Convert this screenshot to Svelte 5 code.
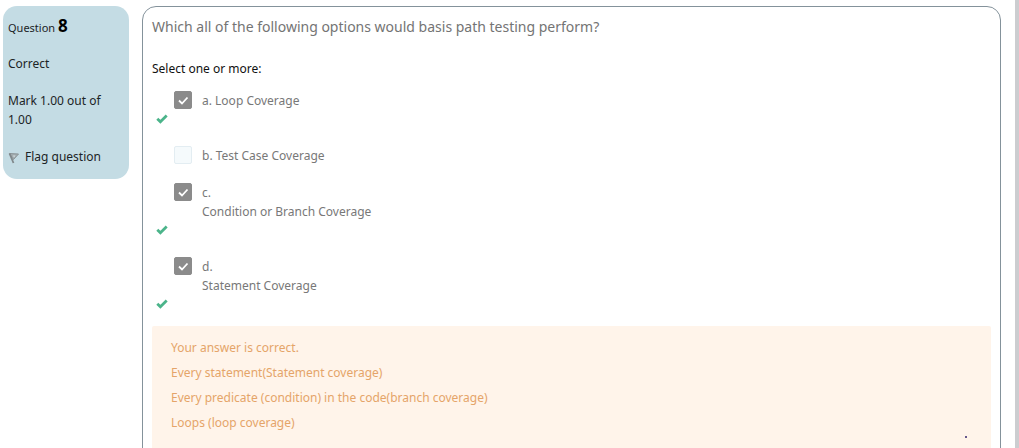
<script>
  const question = 'Which all of the following options would basis path testing perform?';
  const options = [
    { id: 'a', lines: ['a. Loop Coverage'], checked: true },
    { id: 'b', lines: ['b. Test Case Coverage'], checked: false },
    { id: 'c', lines: ['c.', 'Condition or Branch Coverage'], checked: true },
    { id: 'd', lines: ['d.', 'Statement Coverage'], checked: true }
  ];
  const feedback = [
    'Your answer is correct.',
    'Every statement(Statement coverage)',
    'Every predicate (condition) in the code(branch coverage)',
    'Loops (loop coverage)'
  ];
</script>

<main class="page">
  <aside class="info">
    <h2 class="number">Question <strong>8</strong></h2>
    <p class="state">Correct</p>
    <p class="grade">Mark 1.00 out of 1.00</p>
    <button class="flag" type="button">
      <svg width="12" height="12" viewBox="0 0 12 12" aria-hidden="true">
        <path d="M1.5 1.5 10.5 2 5.5 7.5Z" fill="#a3adb0" stroke="#8b9497" stroke-width="1" />
        <path d="M1.5 1.5 5.5 11" fill="none" stroke="#80888b" stroke-width="1.8" />
        <path d="M5 3.5h2.5L6 5.5Z" fill="#d3dcdf" />
      </svg>
      <span>Flag question</span>
    </button>
  </aside>

  <section class="card">
    <p class="question">{question}</p>
    <fieldset class="answers">
      <legend>Select one or more:</legend>
      {#each options as option (option.id)}
        <div class="option">
          <div class="choice">
            <input type="checkbox" id={option.id} checked={option.checked} disabled />
            <label for={option.id}>
              {#each option.lines as line}<span>{line}</span>{/each}
            </label>
          </div>
          {#if option.checked}
            <div class="mark">
              <svg width="12" height="10" viewBox="0 0 12 10" aria-hidden="true">
                <path d="M1.3 4.7 4.4 7.7 10.7 1.6" fill="none" stroke="#4bb48a" stroke-width="2.8" />
              </svg>
            </div>
          {/if}
        </div>
      {/each}
    </fieldset>
    <div class="feedback">
      {#each feedback as line}<p>{line}</p>{/each}
      <span class="dot"></span>
    </div>
  </section>
</main>

<style>
  :global(body) {
    background: #fff;
  }
  .page {
    box-sizing: border-box;
    display: flex;
    align-items: flex-start;
    gap: 13px;
    height: 100vh;
    overflow: hidden;
    padding: 6px 14px 0 3px;
    border-right: 4px solid #cccdd0;
    font: 12px/19px "Noto Sans", sans-serif;
    color: #1c2426;
  }
  p,
  h2 {
    margin: 0;
  }
  .info {
    box-sizing: border-box;
    flex: 0 0 126px;
    display: flex;
    flex-direction: column;
    align-items: flex-start;
    gap: 18px;
    padding: 11px 5px 13px;
    border-radius: 14px;
    background: #c4dce4;
  }
  .number {
    font-size: 11px;
    font-weight: 400;
    line-height: 19px;
  }
  .number strong {
    font-size: 17px;
    line-height: 1;
    color: #000;
  }
  .state {
    margin-top: -1px;
  }
  .grade {
    max-width: 104px;
  }
  .flag {
    display: flex;
    align-items: center;
    gap: 5px;
    padding: 0;
    border: 0;
    background: none;
    font: inherit;
    color: inherit;
  }
  .flag svg {
    margin-top: 3px;
  }
  .card {
    box-sizing: border-box;
    flex: 1;
    min-width: 0;
    padding: 10px 9px;
    border: 1px solid #84929b;
    border-radius: 14px;
  }
  .question {
    font-size: 14px;
    line-height: 20px;
    color: #747474;
  }
  .answers {
    display: flex;
    flex-direction: column;
    gap: 18px;
    min-width: 0;
    margin: 22px 0 13px;
    padding: 0;
    border: 0;
  }
  legend {
    margin-bottom: 13px;
    padding: 0;
    color: #111;
  }
  .choice {
    display: flex;
    align-items: flex-start;
    gap: 10px;
    padding-left: 22px;
    color: #787878;
  }
  .choice label {
    display: flex;
    flex-direction: column;
  }
  input {
    appearance: none;
    box-sizing: border-box;
    width: 18px;
    height: 18px;
    margin: 0;
    border: 1px solid #e3edf2;
    border-radius: 2px;
    background: #f5fafc;
  }
  input:checked {
    border-color: #8b8b8b;
    background: #8b8b8b
      url("data:image/svg+xml,%3Csvg xmlns='http://www.w3.org/2000/svg' viewBox='0 0 16 16'%3E%3Cpath d='M4 8.5 7 11.5 12.5 5.5' fill='none' stroke='white' stroke-width='1.8'/%3E%3C/svg%3E");
  }
  .mark {
    display: flex;
    align-items: center;
    height: 18px;
    padding-left: 4px;
  }
  .feedback {
    position: relative;
    display: flex;
    flex-direction: column;
    gap: 6px;
    padding: 12px 19px 40px;
    border-radius: 2px;
    background: #fff4ea;
    color: #e5a469;
  }
  .dot {
    position: absolute;
    top: 110px;
    right: 24px;
    width: 2px;
    height: 2px;
    border-radius: 1px;
    background: #33236b;
  }
</style>
